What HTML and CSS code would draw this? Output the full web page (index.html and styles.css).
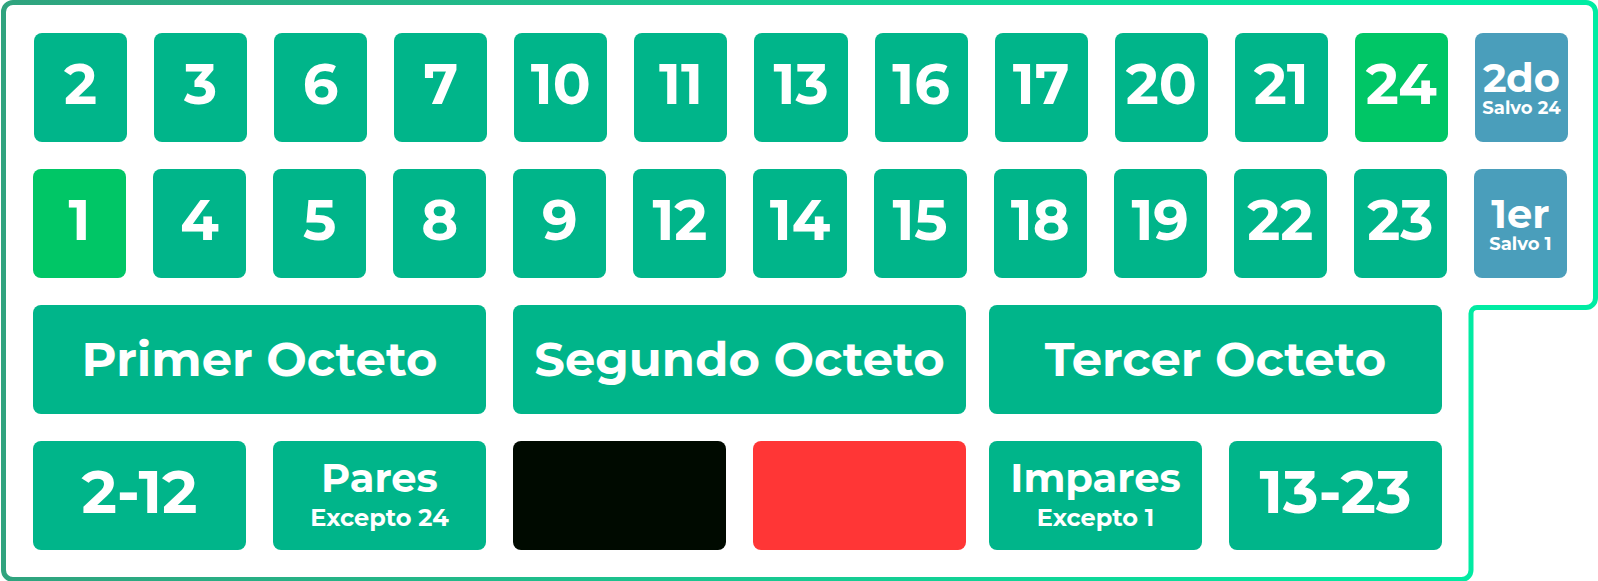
FILE: index.html
```html
<!DOCTYPE html>
<html lang="es">
<head>
<meta charset="utf-8">
<meta name="viewport" content="width=device-width, initial-scale=1">
<title>Tablero</title>
<link rel="stylesheet" href="styles.css">
</head>
<body>
<main class="board">
  <svg class="frame" viewBox="0 0 1598 581" preserveAspectRatio="none" aria-hidden="true">
    <defs>
      <linearGradient id="edge" gradientUnits="userSpaceOnUse" x1="0" y1="0" x2="1500" y2="0">
        <stop offset="0" stop-color="#30a37e"/>
        <stop offset="1" stop-color="#00eca3"/>
      </linearGradient>
    </defs>
    <path d="M13 2.5H1586a9.5 9.5 0 0 1 9.500 9.500V298a9.500 9.500 0 0 1-9.500 9.500H1477a6 6 0 0 0-6 6V570a9.500 9.500 0 0 1-9.500 9.500H13A9.500 9.500 0 0 1 3.500 570V12A9.500 9.500 0 0 1 13 2.500Z" fill="#fff" stroke="url(#edge)" stroke-width="5" vector-effect="non-scaling-stroke"/>
  </svg>
  <div class="row row-top">
    <button class="cell">2</button>
    <button class="cell">3</button>
    <button class="cell">6</button>
    <button class="cell">7</button>
    <button class="cell">10</button>
    <button class="cell">11</button>
    <button class="cell">13</button>
    <button class="cell">16</button>
    <button class="cell">17</button>
    <button class="cell">20</button>
    <button class="cell">21</button>
    <button class="cell cell-bright">24</button>
    <button class="cell cell-blue">2do<small class="note">Salvo 24</small></button>
  </div>
  <div class="row">
    <button class="cell cell-bright">1</button>
    <button class="cell">4</button>
    <button class="cell">5</button>
    <button class="cell">8</button>
    <button class="cell">9</button>
    <button class="cell">12</button>
    <button class="cell">14</button>
    <button class="cell">15</button>
    <button class="cell">18</button>
    <button class="cell">19</button>
    <button class="cell">22</button>
    <button class="cell">23</button>
    <button class="cell cell-blue">1er<small class="note">Salvo 1</small></button>
  </div>
  <div class="groups">
    <section class="group">
      <button class="cell cell-octet">Primer Octeto</button>
      <button class="cell cell-range">2-12</button>
      <button class="cell cell-parity">Pares<small class="note">Excepto 24</small></button>
    </section>
    <section class="group">
      <button class="cell cell-octet">Segundo Octeto</button>
      <button class="cell cell-black" aria-label="Negro"></button>
      <button class="cell cell-red" aria-label="Rojo"></button>
    </section>
    <section class="group">
      <button class="cell cell-octet">Tercer Octeto</button>
      <button class="cell cell-parity">Impares<small class="note">Excepto 1</small></button>
      <button class="cell cell-range">13-23</button>
    </section>
  </div>
</main>
</body>
</html>
```
FILE: styles.css
```css
* {
  box-sizing: border-box;
}

body {
  margin: 0;
  background: #fff;
  font-family: Montserrat, Inter, sans-serif;
}

.board {
  position: relative;
  display: flex;
  flex-direction: column;
  gap: 27px;
  padding: 33px 31px 31px 33px;
}

.frame {
  position: absolute;
  inset: 0;
  z-index: -1;
  width: 100%;
  height: 100%;
}

.row {
  display: grid;
  grid-template-columns: repeat(13, minmax(0, 1fr));
  gap: 27px;
}

.row-top {
  margin: 0 -1px 0 1px;
}

.groups {
  display: flex;
  gap: 23px;
  width: 91.85%;
}

.group {
  flex: 1 1 0;
  min-width: 0;
  display: grid;
  grid-template-columns: repeat(2, minmax(0, 1fr));
  gap: 27px;
}

.group:first-child {
  margin-right: 4px;
}

.cell {
  display: flex;
  flex-direction: column;
  align-items: center;
  justify-content: center;
  min-height: 109px;
  padding: 0 0 8px;
  border: 0;
  border-radius: 8px;
  background: #00b58a;
  color: #fff;
  font-family: inherit;
  font-size: 56px;
  font-weight: 700;
  line-height: 64px;
  white-space: nowrap;
  cursor: pointer;
}

.note {
  font-size: 18px;
  font-weight: 700;
  line-height: 20px;
}

.cell-bright {
  background: #00c666;
}

.cell-blue {
  padding-bottom: 0;
  background: #4a9ebb;
  font-size: 40px;
  line-height: 40px;
}

.cell-octet {
  grid-column: 1 / -1;
  padding-bottom: 2px;
  font-size: 48px;
}

.cell-range {
  font-size: 60px;
}

.cell-parity {
  padding-bottom: 4px;
  font-size: 40px;
  line-height: 48px;
}

.cell-parity .note {
  font-size: 24px;
  line-height: 32px;
}

.cell-black {
  background: #000a00;
}

.cell-red {
  background: #ff3636;
}
```
